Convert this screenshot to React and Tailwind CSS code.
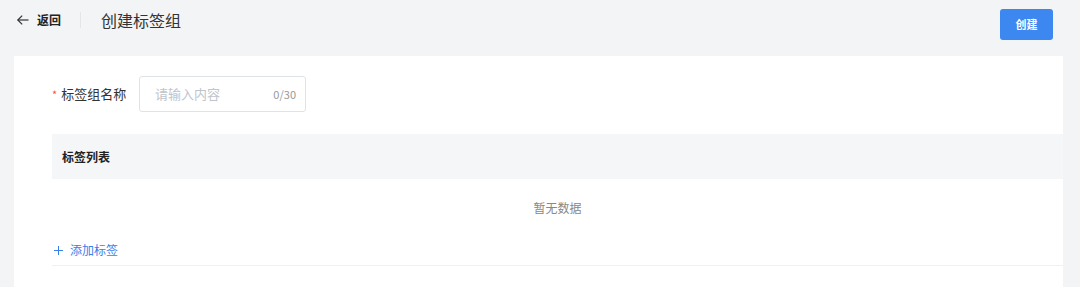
import React from 'react';

const font = { fontFamily: '"Noto Sans CJK SC", "Noto Sans", sans-serif' };

const App = () => {
  return (
    <div className="w-[1080px] h-[287px] overflow-hidden bg-[#f3f4f6] flex flex-col" style={font}>
      <div className="h-[56px] flex items-start pt-[9px] pl-[16px] pr-[27px]">
        <div className="flex items-center h-[24px] mt-[-1px]">
          <button className="flex items-center gap-[7px] text-[12px] font-bold text-[#222] cursor-pointer">
            <svg width="14" height="14" viewBox="0 0 14 14" fill="none" stroke="#333" strokeWidth="1.2">
              <path d="M12.5 7H1.8" />
              <path d="M6.2 2.6L1.8 7l4.4 4.4" />
            </svg>
            返回
          </button>
          <div className="w-px h-[16px] bg-[#e3e5e8] ml-[19px] mr-[20px]" />
          <h1 className="text-[16px] text-[#333] leading-none">创建标签组</h1>
        </div>
        <button className="ml-auto w-[53px] h-[31px] rounded-[3px] bg-[#3d87f0] text-white text-[11px] font-bold">
          创建
        </button>
      </div>

      <div className="flex-1 ml-[14px] w-[1049px] bg-white pl-[38px] pt-[20px]">
        <div className="flex items-center h-[36px]">
          <label className="text-[13px] text-[#333] w-[87px] flex items-center">
            <span className="text-[#f5543f] mr-[4px] text-[11px]">*</span>
            标签组名称
          </label>
          <div className="w-[167px] h-[36px] border border-[#dfe2e6] rounded-[3px] flex items-center pl-[15px] pr-[9px]">
            <span className="text-[13px] text-[#c0c4cc] flex-1">请输入内容</span>
            <span className="text-[11px] text-[#999]">0/30</span>
          </div>
        </div>

        <div className="mt-[22px]">
          <div className="h-[45px] bg-[#f5f6f8] flex items-center pl-[10px] text-[12px] font-bold text-[#222]">
            标签列表
          </div>
          <div className="h-[58px] flex items-center justify-center text-[12px] text-[#888]">
            暂无数据
          </div>
          <div className="h-[29px] flex items-start pl-[2px] border-b border-[#eef0f2]">
            <button className="flex items-center gap-[7px] text-[12px] text-[#3a7ee8] mt-[4px]">
              <svg width="9" height="9" viewBox="0 0 9 9" fill="none" stroke="#3a7ee8" strokeWidth="1">
                <path d="M4.5 0v9M0 4.5h9" />
              </svg>
              添加标签
            </button>
          </div>
        </div>
      </div>
    </div>
  );
};

export default App;
